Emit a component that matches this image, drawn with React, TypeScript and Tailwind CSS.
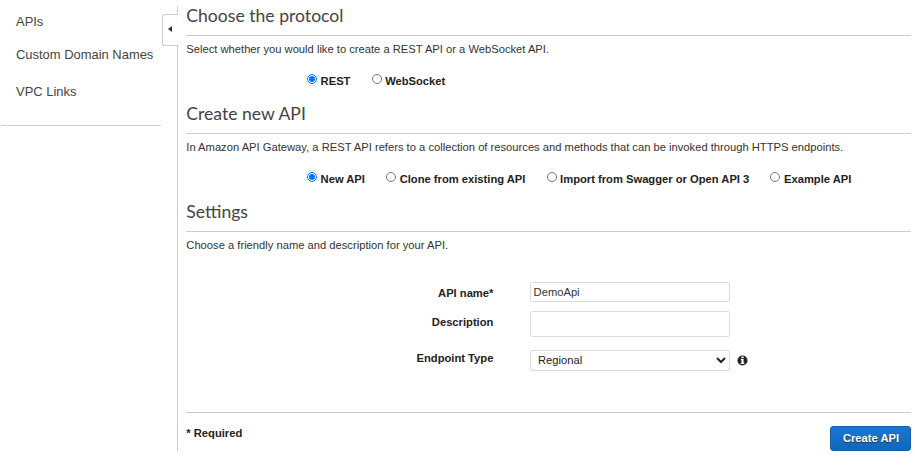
import type { ReactNode } from "react";

const RULE = "border-[#cccccc]";

function Radio({ name, label, checked }: { name: string; label: string; checked?: boolean }) {
  return (
    <label className="flex h-[14px] items-start gap-[3.6px] text-[11.2px] leading-[14px] font-bold whitespace-nowrap text-[#222222]">
      <input type="radio" name={name} defaultChecked={checked} className="m-0 h-[10px] w-[10px] shrink-0" />
      <span>{label}</span>
    </label>
  );
}

function Section({ title, text, children }: { title: string; text: string; children?: ReactNode }) {
  return (
    <section className="h-[98px]">
      <h2 className={`h-[36px] border-b ${RULE} pt-[4px] font-['Lato',sans-serif] text-[17.6px] leading-[24px] text-[#444444]`}>
        <span className="ml-[0.3px]">{title}</span>
      </h2>
      <p className="pt-[6px] pl-[0.3px] text-[11.2px] leading-[14px] whitespace-nowrap text-[#333333]">{text}</p>
      <div className="flex gap-[21.1px] pt-[18px] pl-[121px]">{children}</div>
    </section>
  );
}

function Field({ label, className, labelClass, children }: { label: string; className: string; labelClass: string; children: ReactNode }) {
  return (
    <div className={`flex items-start ${className}`}>
      <span className={`w-[307.4px] shrink-0 text-right text-[11.2px] leading-[14px] font-bold text-[#222222] ${labelClass}`}>
        {label}
      </span>
      <div className="ml-[36.6px] flex items-center">{children}</div>
    </div>
  );
}

export default function App() {
  return (
    <div className="flex h-[468px] w-[915px] overflow-hidden bg-white font-['Liberation_Sans',Arial,sans-serif]">
      <nav className="w-[162px] shrink-0 text-[12.95px] leading-[16px] whitespace-nowrap text-[#444444]">
        <div className={`ml-px h-[126px] w-[160px] border-b ${RULE} pl-[15px]`}>
          <div className="pt-[14px]">APIs</div>
          <div className="pt-[17px]">Custom Domain Names</div>
          <div className="pt-[21px]">VPC Links</div>
        </div>
      </nav>

      <div className="flex w-[16px] shrink-0 flex-col items-end pt-[6px]">
        <div className={`h-[8px] border-r ${RULE}`} />
        <button className={`flex h-[32px] w-[16px] items-center rounded-l-[3px] border border-r-0 ${RULE} pb-[2px] pl-[5px]`}>
          <svg width="4" height="6" viewBox="0 0 4 6">
            <path d="M4 0v6L0 3z" fill="#333" />
          </svg>
        </button>
        <div className={`h-[405px] border-r ${RULE}`} />
      </div>

      <main className="ml-[8px] w-[725px] shrink-0">
        <Section title="Choose the protocol" text="Select whether you would like to create a REST API or a WebSocket API.">
          <Radio name="protocol" label="REST" checked />
          <Radio name="protocol" label="WebSocket" />
        </Section>
        <Section
          title="Create new API"
          text="In Amazon API Gateway, a REST API refers to a collection of resources and methods that can be invoked through HTTPS endpoints."
        >
          <Radio name="source" label="New API" checked />
          <Radio name="source" label="Clone from existing API" />
          <Radio name="source" label="Import from Swagger or Open API 3" />
          <Radio name="source" label="Example API" />
        </Section>
        <Section title="Settings" text="Choose a friendly name and description for your API." />

        <div className={`-mt-[12px] h-[131px] border-b ${RULE}`}>
          <Field label="API name*" className="h-[29px]" labelClass="pt-[4px]">
            <input
              defaultValue="DemoApi"
              className="h-[20px] w-[200px] rounded-[2px] border border-[#dddddd] px-[2.6px] text-[11.2px] text-[#333333] outline-none"
            />
          </Field>
          <Field label="Description" className="h-[39px]" labelClass="pt-[4px]">
            <input className="h-[26px] w-[200px] rounded-[2px] border border-[#dddddd] px-[3px] text-[11.2px] outline-none" />
          </Field>
          <Field label="Endpoint Type" className="h-[21px]" labelClass="pt-[1px]">
            <select className="h-[21px] w-[200px] rounded-[2px] border border-[#dddddd] bg-white px-[3px] pb-[1px] text-[11.2px] text-[#222222] outline-none">
              <option>Regional</option>
            </select>
            <svg className="ml-[7px]" width="11" height="11" viewBox="0 0 11 11">
              <circle cx="5.5" cy="5.5" r="5" fill="#222" />
              <path d="M4.4 1.6h2.2v1.6H4.4zM3.8 4.1h2.8v3.6h.8V9H3.7V7.7h.8V5.3h-.7z" fill="#fff" />
            </svg>
          </Field>
        </div>

        <div className="flex justify-between pt-[13px]">
          <span className="pl-[0.3px] text-[11.2px] leading-[14px] font-bold text-[#222222]">* Required</span>
          <button className="h-[25px] w-[81px] rounded-[3px] border border-[#1360ab] bg-linear-to-b from-[#1977d4] to-[#1166bb] pb-[1px] pl-[1px] text-[11.2px] leading-[14px] font-bold whitespace-nowrap text-white [text-shadow:0_1px_1px_#333]">
            Create API
          </button>
        </div>
      </main>
    </div>
  );
}
